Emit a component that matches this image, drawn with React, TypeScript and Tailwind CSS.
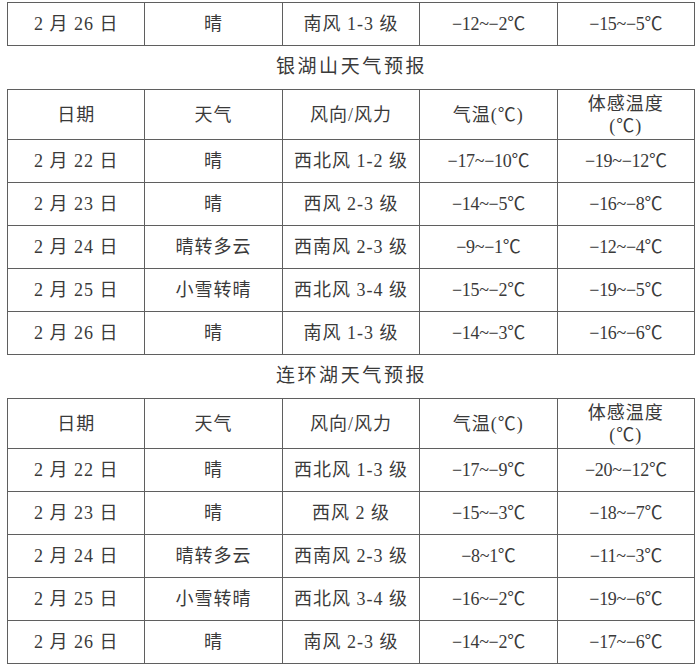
import React from 'react';

type Row = [string, string, string, string, string];

const latest: Row = ['2 月 26 日', '晴', '南风 1-3 级', '−12~−2℃', '−15~−5℃'];

const yinhu: Row[] = [
    ['2 月 22 日', '晴', '西北风 1-2 级', '−17~−10℃', '−19~−12℃'],
    ['2 月 23 日', '晴', '西风 2-3 级', '−14~−5℃', '−16~−8℃'],
    ['2 月 24 日', '晴转多云', '西南风 2-3 级', '−9~−1℃', '−12~−4℃'],
    ['2 月 25 日', '小雪转晴', '西北风 3-4 级', '−15~−2℃', '−19~−5℃'],
    ['2 月 26 日', '晴', '南风 1-3 级', '−14~−3℃', '−16~−6℃'],
];

const lianhuan: Row[] = [
    ['2 月 22 日', '晴', '西北风 1-3 级', '−17~−9℃', '−20~−12℃'],
    ['2 月 23 日', '晴', '西风 2 级', '−15~−3℃', '−18~−7℃'],
    ['2 月 24 日', '晴转多云', '西南风 2-3 级', '−8~1℃', '−11~−3℃'],
    ['2 月 25 日', '小雪转晴', '西北风 3-4 级', '−16~−2℃', '−19~−6℃'],
    ['2 月 26 日', '晴', '南风 2-3 级', '−14~−2℃', '−17~−6℃'],
];

// Plain cell, all five columns share the same width
function Cell({ children, tight }: { children: React.ReactNode; tight?: boolean }) {
    return (
        <td
            className={
                'w-[137px] border-[1.5px] border-[#5f5f5f] p-0 text-center align-middle font-[\'Liberation_Serif\',\'Noto_Sans_CJK_SC\',serif] text-[18px] leading-[20px] text-[#3a3a3a] ' +
                (tight ? 'tracking-[-0.3px]' : 'tracking-[1px]')
            }
        >
            {children}
        </td>
    );
}

function DataRow({ row }: { row: Row }) {
    return (
        <tr className="h-[43px]">
            {row.map((c, i) => (
                <Cell key={i} tight={i > 2}>
                    {c}
                </Cell>
            ))}
        </tr>
    );
}

function Title({ text }: { text: string }) {
    return (
        <div className="flex h-[43px] items-center justify-center pl-[3px] font-['Liberation_Serif','Noto_Sans_CJK_SC',serif] text-[19px] tracking-[2.6px] text-[#3a3a3a]">
            {text}
        </div>
    );
}

function Forecast({ rows }: { rows: Row[] }) {
    return (
        <table className="ml-[7px] w-[688px] table-fixed border-collapse">
            <tbody>
                <tr className="h-[50px]">
                    <Cell>日期</Cell>
                    <Cell>天气</Cell>
                    <Cell>风向/风力</Cell>
                    <Cell>气温(℃)</Cell>
                    <Cell>
                        <div className="leading-[22px]">体感温度</div>
                        <div className="leading-[22px]">(℃)</div>
                    </Cell>
                </tr>
                {rows.map((r, i) => (
                    <DataRow key={i} row={r} />
                ))}
            </tbody>
        </table>
    );
}

export default function App() {
    return (
        <div className="h-[672px] w-[700px] bg-white pt-[2px]">
            <table className="ml-[7px] w-[688px] table-fixed border-collapse">
                <tbody>
                    <DataRow row={latest} />
                </tbody>
            </table>
            <Title text="银湖山天气预报" />
            <Forecast rows={yinhu} />
            <Title text="连环湖天气预报" />
            <Forecast rows={lianhuan} />
        </div>
    );
}
